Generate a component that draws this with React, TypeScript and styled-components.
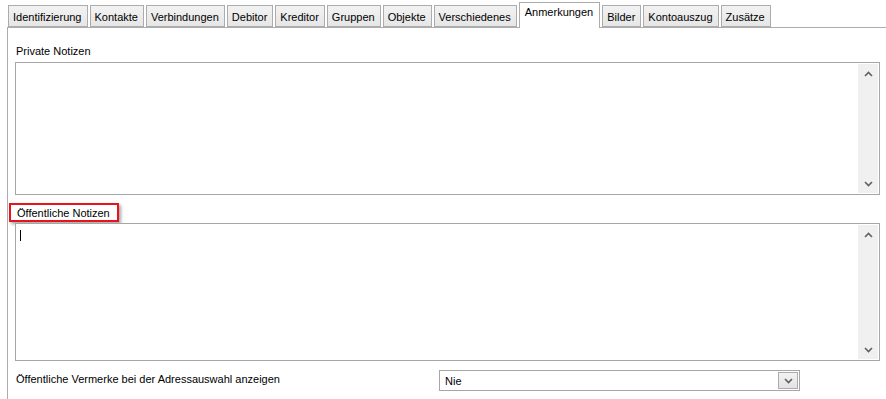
import React from 'react';
import styled, { createGlobalStyle } from 'styled-components';

const tabs = [
  'Identifizierung',
  'Kontakte',
  'Verbindungen',
  'Debitor',
  'Kreditor',
  'Gruppen',
  'Objekte',
  'Verschiedenes',
  'Anmerkungen',
  'Bilder',
  'Kontoauszug',
  'Zusätze',
];

const Chevron = ({ up }: { up?: boolean }) => (
  <svg width="9" height="6" viewBox="0 0 9 6">
    <path
      d={up ? 'M1 5 L4.5 1.5 L8 5' : 'M1 1 L4.5 4.5 L8 1'}
      fill="none"
      stroke="#606060"
      strokeWidth="1.6"
    />
  </svg>
);

const NoteBox = ({ height, caret }: { height: number; caret?: boolean }) => (
  <TextBox style={{ height }}>
    <TextArea>{caret && <Caret />}</TextArea>
    <ScrollBar>
      <Chevron up />
      <Chevron />
    </ScrollBar>
  </TextBox>
);

export default function App() {
  return (
    <>
      <GlobalStyle />
      <Page>
        <TabStrip>
          {tabs.map((t) => (
            <Tab key={t} $active={t === 'Anmerkungen'}>
              {t}
            </Tab>
          ))}
        </TabStrip>
        <Panel>
          <Label>Private Notizen</Label>
          <NoteBox height={133} />
          <Highlight>Öffentliche Notizen</Highlight>
          <NoteBox height={138} caret />
          <OptionRow>
            <OptionLabel>Öffentliche Vermerke bei der Adressauswahl anzeigen</OptionLabel>
            <Select>
              <span>Nie</span>
              <DropButton>
                <Chevron />
              </DropButton>
            </Select>
          </OptionRow>
        </Panel>
      </Page>
    </>
  );
}

const GlobalStyle = createGlobalStyle`
  body {
    margin: 0;
    background: #ffffff;
    font-family: "Liberation Sans", Arial, sans-serif;
    font-size: 11px;
    color: #000000;
  }
`;

const Page = styled.div`
  width: 886px;
  height: 399px;
  overflow: hidden;
  padding-top: 2px;
  box-sizing: border-box;
`;

const TabStrip = styled.div`
  display: flex;
  align-items: flex-end;
  gap: 2px;
  padding-left: 8px;
  height: 25px;
  position: relative;
  z-index: 1;
`;

const Tab = styled.div<{ $active?: boolean }>`
  box-sizing: border-box;
  height: ${(p) => (p.$active ? '26px' : '22px')};
  margin-bottom: ${(p) => (p.$active ? '-1px' : '0')};
  padding: ${(p) => (p.$active ? '2px 6px 0 5px' : '4px 5px 0 4px')};
  border: 1px solid #acacac;
  border-bottom: ${(p) => (p.$active ? 'none' : '1px solid #acacac')};
  background: ${(p) =>
    p.$active ? '#ffffff' : 'linear-gradient(#f2f2f2, #e6e6e6)'};
  white-space: nowrap;
  line-height: 14px;
`;

const Panel = styled.div`
  margin-left: 7px;
  border-top: 1px solid #acacac;
  border-left: 1px solid #acacac;
  padding: 17px 6px 0 7px;
  display: flex;
  flex-direction: column;
  height: 380px;
  box-sizing: border-box;
`;

const Label = styled.div`
  height: 17px;
  line-height: 13px;
  padding-left: 1px;
`;

const TextBox = styled.div`
  display: flex;
  border: 1px solid #a6a6a6;
  box-sizing: border-box;
  background: #ffffff;
`;

const TextArea = styled.div`
  flex: 1;
  padding: 6px 4px;
`;

const Caret = styled.div`
  width: 1px;
  height: 11px;
  background: #000000;
`;

const ScrollBar = styled.div`
  width: 20px;
  margin: 1px 1px 1px 0;
  background: #f0f0f0;
  display: flex;
  flex-direction: column;
  justify-content: space-between;
  align-items: center;
  padding: 7px 0 6px;
`;

const Highlight = styled.div`
  align-self: flex-start;
  margin: 8px 0 1px -6px;
  height: 19px;
  width: 110px;
  box-sizing: border-box;
  border: 2px solid #e8141b;
  box-shadow: 2px 2px 3px rgba(0, 0, 0, 0.35);
  padding: 0 0 0 6px;
  line-height: 16px;
  white-space: nowrap;
`;

const OptionRow = styled.div`
  display: grid;
  grid-template-columns: 423px 361px;
  align-items: center;
  margin-top: 9px;
  padding-left: 1px;
`;

const OptionLabel = styled.span`
  margin-bottom: 3px;
`;

const Select = styled.div`
  height: 21px;
  box-sizing: border-box;
  border: 1px solid #a6a6a6;
  display: flex;
  align-items: center;
  justify-content: space-between;
  padding: 0 1px 0 5px;
`;

const DropButton = styled.div`
  width: 20px;
  height: 17px;
  box-sizing: border-box;
  border: 1px solid #acacac;
  background: linear-gradient(#f2f2f2, #e3e3e3);
  display: flex;
  align-items: center;
  justify-content: center;
`;
